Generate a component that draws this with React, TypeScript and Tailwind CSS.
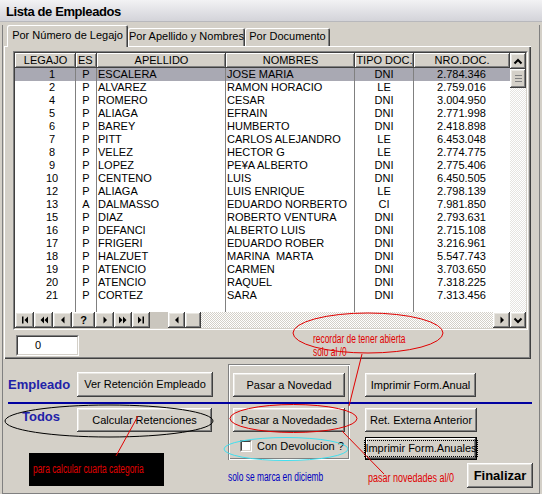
import React from "react";

type Row = [string, string, string, string, string, string];

const rows: Row[] = [
  ["1", "P", "ESCALERA", "JOSE MARIA", "DNI", "2.784.346"],
  ["2", "P", "ALVAREZ", "RAMON HORACIO", "LE", "2.759.016"],
  ["4", "P", "ROMERO", "CESAR", "DNI", "3.004.950"],
  ["5", "P", "ALIAGA", "EFRAIN", "DNI", "2.771.998"],
  ["6", "P", "BAREY", "HUMBERTO", "DNI", "2.418.898"],
  ["7", "P", "PITT", "CARLOS ALEJANDRO", "LE", "6.453.048"],
  ["8", "P", "VELEZ", "HECTOR G", "LE", "2.774.775"],
  ["9", "P", "LOPEZ", "PE¥A ALBERTO", "DNI", "2.775.406"],
  ["10", "P", "CENTENO", "LUIS", "DNI", "6.450.505"],
  ["12", "P", "ALIAGA", "LUIS ENRIQUE", "LE", "2.798.139"],
  ["13", "A", "DALMASSO", "EDUARDO NORBERTO", "CI", "7.981.850"],
  ["15", "P", "DIAZ", "ROBERTO VENTURA", "DNI", "2.793.631"],
  ["16", "P", "DEFANCI", "ALBERTO LUIS", "DNI", "2.715.108"],
  ["17", "P", "FRIGERI", "EDUARDO ROBER", "DNI", "3.216.961"],
  ["18", "P", "HALZUET", "MARINA\u00a0 MARTA", "DNI", "5.547.743"],
  ["19", "P", "ATENCIO", "CARMEN", "DNI", "3.703.650"],
  ["20", "P", "ATENCIO", "RAQUEL", "DNI", "7.318.225"],
  ["21", "P", "CORTEZ", "SARA", "DNI", "7.313.456"],
];

function Btn({ className = "", children }: { className?: string; children?: React.ReactNode }) {
  return (
    <div
      className={
        "flex shrink-0 items-center justify-center whitespace-nowrap bg-[#d4d0c8] text-[11px] leading-none text-black shadow-[inset_-1px_-1px_#404040,inset_1px_1px_#ffffff,inset_-2px_-2px_#808080,inset_2px_2px_#e8e6e1] " +
        className
      }
    >
      {children}
    </div>
  );
}

function Ico({ children }: { children: React.ReactNode }) {
  return (
    <svg width="10" height="8" viewBox="0 0 10 8" fill="#000">
      {children}
    </svg>
  );
}

function RowCells({ r, sel }: { r?: Row; sel?: boolean }) {
  return (
    <div className={"flex h-[13px] text-[11px] leading-[13px] text-black " + (sel ? "bg-[#a9a9b3]" : "bg-white")}>
      <div className="w-[61px] shrink-0 border-r border-[#808080] pl-[14px] text-center">{r ? r[0] : ""}</div>
      <div className="w-[21px] shrink-0 border-r border-[#808080] text-center">{r ? r[1] : ""}</div>
      <div className="w-[129px] shrink-0 overflow-hidden whitespace-pre border-r border-[#808080] pl-[1px]">{r ? r[2] : ""}</div>
      <div className="w-[129px] shrink-0 overflow-hidden whitespace-pre border-r border-[#808080] pl-[1px]">{r ? r[3] : ""}</div>
      <div className="w-[59px] shrink-0 border-r border-[#808080] text-center">{r ? r[4] : ""}</div>
      <div className="w-[95px] shrink-0 text-center">{r ? r[5] : ""}</div>
    </div>
  );
}

const hdr =
  "flex h-[15px] shrink-0 items-center justify-center overflow-hidden bg-[#d4d0c8] text-[11px] leading-none text-black shadow-[inset_-1px_-1px_#404040,inset_1px_1px_#ffffff,inset_-2px_-2px_#808080]";

export default function App() {
  return (
    <div className="relative h-[494px] w-[542px] overflow-hidden bg-[#d4d0c8] font-['Liberation_Sans',Arial,sans-serif] text-black">
      {/* title bar */}
      <div className="flex h-[22px] items-center bg-gradient-to-b from-[#f2f2f4] to-[#d2d2d8] pl-[6px] shadow-[inset_0_-1px_#b8b8bc]">
        <span className="text-[13px] font-bold leading-none tracking-[-0.4px] text-black">Lista de Empleados</span>
      </div>

      {/* body */}
      <div className="h-[472px] shadow-[inset_2px_0_#d4d0c8,inset_3px_0_#808080,inset_-2px_0_#d4d0c8,inset_-3px_0_#808080,inset_0_-3px_#d4d0c8,inset_0_-4px_#808080]">
        {/* tabs */}
        <div className="ml-[4px] w-[527px]">
          <div className="mt-[3px] flex h-[21px] items-end pl-[3px]">
            <div className="relative z-10 -mb-[1px] flex h-[22px] w-[121px] items-start justify-center rounded-t-[2px] bg-[#d4d0c8] pt-[5px] text-[11px] leading-none shadow-[inset_1px_1px_#ffffff,inset_-1px_0_#404040,inset_-2px_0_#808080]">
              Por Número de Legajo
            </div>
            <div className="flex h-[18px] w-[117px] items-start justify-center rounded-t-[2px] bg-[#d4d0c8] pt-[3px] text-[11px] leading-none shadow-[inset_1px_1px_#ffffff,inset_-1px_0_#404040,inset_-2px_0_#808080]">
              Por Apellido y Nombres
            </div>
            <div className="flex h-[18px] w-[85px] items-start justify-center rounded-t-[2px] bg-[#d4d0c8] pt-[3px] text-[11px] leading-none shadow-[inset_1px_1px_#ffffff,inset_-1px_0_#404040,inset_-2px_0_#808080]">
              Por Documento
            </div>
          </div>

          {/* tab sheet */}
          <div className="relative h-[313px] overflow-hidden bg-[#d4d0c8] pt-[5px] shadow-[inset_1px_1px_#ffffff,inset_-1px_-1px_#404040,inset_-2px_-2px_#808080]">
            {/* grid */}
            <div className="ml-[9px] h-[279px] w-[515px] border border-b-white border-l-[#808080] border-r-white border-t-[#808080]">
              <div className="flex h-full w-full flex-col border border-b-[#d4d0c8] border-l-[#404040] border-r-[#d4d0c8] border-t-[#404040]">
                <div className="flex h-[259px]">
                  <div className="flex w-[495px] flex-col bg-white">
                    <div className="flex">
                      <div className={hdr + " w-[61px]"}>LEGAJO</div>
                      <div className={hdr + " w-[21px] justify-start pl-[2px]"}>ES</div>
                      <div className={hdr + " w-[129px]"}>APELLIDO</div>
                      <div className={hdr + " w-[129px]"}>NOMBRES</div>
                      <div className={hdr + " w-[59px]"}>TIPO DOC.</div>
                      <div className={hdr + " w-[96px]"}>NRO.DOC.</div>
                    </div>
                    {rows.map((r, i) => (
                      <RowCells key={i} r={r} sel={i === 0} />
                    ))}
                    <div className="flex flex-1">
                      <div className="w-[61px] border-r border-[#808080]" />
                      <div className="w-[21px] border-r border-[#808080]" />
                      <div className="w-[129px] border-r border-[#808080]" />
                      <div className="w-[129px] border-r border-[#808080]" />
                      <div className="w-[59px] border-r border-[#808080]" />
                    </div>
                  </div>
                  {/* vertical scrollbar */}
                  <div className="flex w-[16px] flex-col">
                    <Btn className="h-[16px] w-[16px]">
                      <svg width="10" height="7" viewBox="0 0 10 7">
                        <path d="M1.5 5.5 L5 2 L8.5 5.5" stroke="#000" strokeWidth="2" fill="none" />
                      </svg>
                    </Btn>
                    <Btn className="h-[19px] w-[16px] flex-col gap-[2px]">
                      <div className="h-px w-[7px] bg-[#808080]" />
                      <div className="h-px w-[7px] bg-[#808080]" />
                      <div className="h-px w-[7px] bg-[#808080]" />
                    </Btn>
                    <div className="flex-1 bg-[repeating-conic-gradient(#e6e4e0_0_25%,#ffffff_0_50%)] bg-[length:2px_2px]" />
                  </div>
                </div>
                {/* bottom bar: navigator + hscroll */}
                <div className="flex h-[16px]">
                  <Btn className="h-[16px] w-[19px]">
                    <Ico>
                      <rect x="2" y="0.5" width="1.5" height="7" />
                      <path d="M8 0.5 L8 7.5 L4.5 4 Z" />
                    </Ico>
                  </Btn>
                  <Btn className="h-[16px] w-[19px]">
                    <Ico>
                      <path d="M5 0.5 L5 7.5 L1.5 4 Z M9 0.5 L9 7.5 L5.5 4 Z" />
                    </Ico>
                  </Btn>
                  <Btn className="h-[16px] w-[19px]">
                    <Ico>
                      <path d="M6.5 0.5 L6.5 7.5 L3 4 Z" />
                    </Ico>
                  </Btn>
                  <Btn className="h-[16px] w-[23px] text-[10px] font-bold">?</Btn>
                  <Btn className="h-[16px] w-[19px]">
                    <Ico>
                      <path d="M3.5 0.5 L3.5 7.5 L7 4 Z" />
                    </Ico>
                  </Btn>
                  <Btn className="h-[16px] w-[18px]">
                    <Ico>
                      <path d="M1 0.5 L1 7.5 L4.5 4 Z M5 0.5 L5 7.5 L8.5 4 Z" />
                    </Ico>
                  </Btn>
                  <Btn className="h-[16px] w-[18px]">
                    <Ico>
                      <path d="M2 0.5 L2 7.5 L5.5 4 Z" />
                      <rect x="6.5" y="0.5" width="1.5" height="7" />
                    </Ico>
                  </Btn>
                  <div className="w-[18px] bg-[#cac6be]" />
                  <Btn className="h-[16px] w-[17px]">
                    <Ico>
                      <path d="M6.5 0.5 L6.5 7.5 L3 4 Z" />
                    </Ico>
                  </Btn>
                  <Btn className="h-[16px] w-[16px]" />
                  <div className="flex-1 bg-[repeating-conic-gradient(#d4d0c8_0_25%,#ffffff_0_50%)] bg-[length:2px_2px]" />
                  <Btn className="h-[16px] w-[17px]">
                    <Ico>
                      <path d="M3.5 0.5 L3.5 7.5 L7 4 Z" />
                    </Ico>
                  </Btn>
                  <Btn className="h-[16px] w-[16px]">
                    <svg width="10" height="7" viewBox="0 0 10 7">
                      <path d="M1.5 1.5 L5 5 L8.5 1.5" stroke="#000" strokeWidth="2" fill="none" />
                    </svg>
                  </Btn>
                </div>
              </div>
            </div>

            {/* edit box */}
            <div className="ml-[12px] mt-[5px] h-[21px] w-[63px] border border-b-white border-l-[#808080] border-r-white border-t-[#808080]">
              <div className="flex h-full w-full items-center border border-b-[#d4d0c8] border-l-[#404040] border-r-[#d4d0c8] border-t-[#404040] bg-white pl-[17px] text-[11px] leading-none">
                0
              </div>
            </div>

            {/* annotation inside sheet */}
            <div className="absolute left-[309px] top-[286px] whitespace-nowrap text-[12px] leading-[14px] text-[#e00000]">
              <span className="inline-block origin-left scale-x-[0.7]">recordar de tener abierta</span>
            </div>
            <div className="absolute left-[309px] top-[299px] whitespace-nowrap text-[12px] leading-[14px] text-[#e00000]">
              <span className="inline-block origin-left scale-x-[0.7]">solo al /0</span>
            </div>
          </div>
        </div>

        {/* lower section */}
        <div className="relative flex h-[131px]">
          {/* left column */}
          <div className="ml-[8px] flex w-[205px] flex-col">
            <div className="mt-[13px] flex h-[25px] items-center">
              <span className="w-[69px] text-[13px] font-bold leading-none text-[#2222a8]">Empleado</span>
              <Btn className="h-[25px] w-[136px]">Ver Retención Empleado</Btn>
            </div>
            <div className="mt-[11px] flex h-[24px] items-start">
              <span className="ml-[14px] w-[55px] text-[13px] font-bold leading-[18px] text-[#2222a8]">Todos</span>
              <Btn className="h-[24px] w-[135px]">Calcular Retenciones</Btn>
            </div>
            <div className="ml-[21px] mt-[21px] h-[33px] w-[135px] bg-black pl-[4px] pt-[3px]">
              <span className="inline-block origin-left scale-x-[0.7] whitespace-nowrap text-[12px] leading-[14px] text-[#e00000]">
                para calcular cuarta categoria
              </span>
            </div>
          </div>

          {/* middle column */}
          <div className="ml-[15px] flex w-[122px] flex-col">
            <div className="mt-[5px] h-[96px] w-[122px] pl-[5px] pt-[9px] shadow-[inset_1px_1px_#808080,inset_-1px_-1px_#ffffff,inset_2px_2px_#ffffff,inset_-2px_-2px_#808080]">
              <Btn className="h-[24px] w-[112px]">Pasar a Novedad</Btn>
              <Btn className="mt-[11px] h-[24px] w-[112px]">Pasar a Novedades</Btn>
              <div className="mt-[8px] flex items-center">
                <div className="ml-[7px] h-[12px] w-[12px] border border-b-white border-l-[#808080] border-r-white border-t-[#808080]">
                  <div className="h-full w-full border border-b-[#d4d0c8] border-l-[#404040] border-r-[#d4d0c8] border-t-[#404040] bg-white" />
                </div>
                <span className="ml-[5px] text-[11px] leading-none">Con Devolucion ?</span>
              </div>
            </div>
            <div className="mt-[10px] whitespace-nowrap text-[12px] leading-[14px] text-[#0000c0]">
              <span className="inline-block origin-left scale-x-[0.7]">solo se marca en diciemb</span>
            </div>
          </div>

          {/* right column */}
          <div className="ml-[15px] flex w-[168px] flex-col">
            <Btn className="mt-[14px] h-[24px] w-[111px]">Imprimir Form.Anual</Btn>
            <Btn className="mt-[11px] h-[24px] w-[112px]">Ret. Externa Anterior</Btn>
            <div className="mt-[5px] flex h-[23px] w-[112px] items-center justify-center whitespace-nowrap border border-black bg-[#d4d0c8] text-[11px] leading-none shadow-[inset_-1px_-1px_#404040,inset_1px_1px_#ffffff,inset_-2px_-2px_#808080]">
              <span className="py-[2px] outline outline-1 outline-dotted outline-black">Imprimir Form.Anuales</span>
            </div>
            <div className="mt-[3px] flex">
              <div className="ml-[3px] mt-[8px] w-[90px] shrink-0 overflow-visible whitespace-nowrap text-[12px] leading-[14px] text-[#e00000]">
                <span className="inline-block origin-left scale-x-[0.75]">pasar novedades al/0</span>
              </div>
              <Btn className="ml-auto h-[25px] w-[66px] text-[13px] font-bold">Finalizar</Btn>
            </div>
          </div>

          {/* blue rule line */}
          <div className="absolute left-[8px] top-[43px] h-[2px] w-[524px] bg-[#0000a0]" />
        </div>
      </div>

      {/* annotation overlay */}
      <svg className="pointer-events-none absolute left-0 top-0 z-20" width="542" height="494">
        <ellipse cx="368" cy="333" rx="75" ry="20" fill="none" stroke="#e00000" strokeWidth="1" />
        <line x1="362" y1="354" x2="349" y2="406" stroke="#e00000" strokeWidth="1" />
        <ellipse cx="293.5" cy="418.5" rx="63.5" ry="14" fill="none" stroke="#e00000" strokeWidth="1" />
        <line x1="342" y1="431" x2="384" y2="474" stroke="#e00000" strokeWidth="1" />
        <ellipse cx="286" cy="449" rx="62" ry="11.5" fill="none" stroke="#40e0f0" strokeWidth="1" />
        <ellipse cx="109" cy="421" rx="104" ry="16" fill="none" stroke="#000" strokeWidth="1" />
        <line x1="138" y1="416" x2="116" y2="456" stroke="#e00000" strokeWidth="1" />
      </svg>
    </div>
  );
}
